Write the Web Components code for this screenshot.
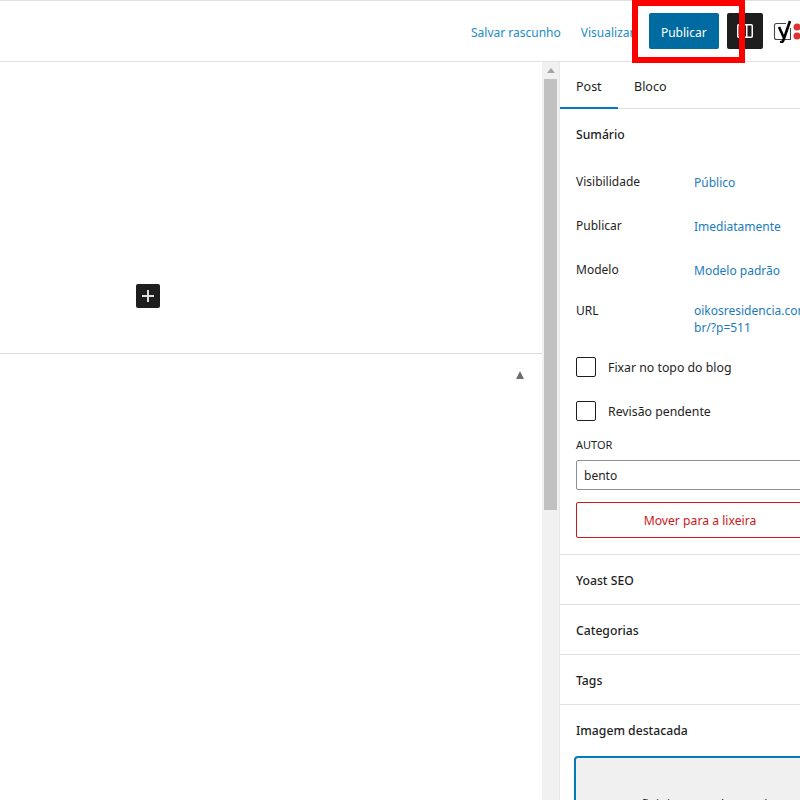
<!DOCTYPE html>
<html lang="pt-BR"><head><meta charset="utf-8"><title>Editor</title>
<style>
html,body{margin:0;padding:0;background:#fff}
body{width:800px;height:800px;overflow:hidden;position:relative;font:12px/18px "Noto Sans","Open Sans",sans-serif;color:#1e1e1e}
</style></head><body>
<editor-app></editor-app>
<script>
function def(name,html){customElements.define(name,class extends HTMLElement{constructor(){super();this.attachShadow({mode:'open'}).innerHTML=html}})}
def('top-bar',`<style>
:host{display:flex;align-items:center;box-sizing:border-box;height:62px;padding:0 0 0 471px;border-top:1px solid #e0e0e0;border-bottom:1px solid #e0e0e0;background:#fff;overflow:hidden;position:relative}
a{color:#1a8cc9;white-space:nowrap;text-decoration:none;flex:none;line-height:18px;padding-top:3px}
.vis{margin-left:20px;width:58px;overflow:hidden}
.pub{flex:none;box-sizing:border-box;width:70px;height:36px;margin-left:10px;padding-top:3px;background:#006ba1;color:#fff;border-radius:2px;display:flex;align-items:center;justify-content:center}
.set{flex:none;width:36px;height:36px;background:#1e1e1e;border-radius:2px;margin-left:8px;display:flex;align-items:center;justify-content:center}
svg{display:block;flex:none}
.yo{margin-left:9px}
</style>
<a>Salvar rascunho</a><a class="vis">Visualizar</a>
<div class="pub">Publicar</div>
<div class="set"><svg width="18" height="18" viewBox="0 0 18 18" fill="none"><rect x="1.75" y="2.75" width="14.5" height="12.5" rx="1" stroke="#fff" stroke-width="1.5"/><rect x="10" y="3" width="1.5" height="12" fill="#fff"/></svg></div>
<svg class="yo" width="32" height="24" viewBox="0 0 32 24"><path d="M14 4.5H4.5a2 2 0 0 0-2 2v12a2 2 0 0 0 2 2h14V9" fill="#fff" stroke="#444" stroke-width="1.1"/><path d="M7 8l5 11M18 2l-6.5 19q-.8 2.4-3.5 2.4" fill="none" stroke="#000" stroke-width="2.6"/><circle cx="25" cy="8" r="3.5" fill="#dc3232"/><circle cx="25" cy="17" r="3.5" fill="#dc3232"/></svg>`);
def('editor-canvas',`<style>
:host{display:flex;flex-direction:column;flex:none;width:542px;height:738px;background:#fff}
.blocks{flex:none;height:292px;box-sizing:border-box;border-bottom:1px solid #ddd;padding-top:222px;padding-left:136px}
.add{width:24px;height:24px;background:#1e1e1e;border-radius:2px;display:flex;align-items:center;justify-content:center}
.meta{flex:1;display:flex;justify-content:flex-end;padding:17px 18px 0 0}
.tri{width:0;height:0;border:4.5px solid transparent;border-top:0;border-bottom:8px solid #6c7074}
</style>
<div class="blocks"><div class="add"><svg width="14" height="14" viewBox="0 0 14 14"><path d="M6 1h2v5h5v2H8v5H6V8H1V6h5z" fill="#e0e0e0"/></svg></div></div>
<div class="meta"><div class="tri"></div></div>`);
def('scroll-bar',`<style>
:host{display:flex;flex-direction:column;flex:none;box-sizing:border-box;width:18px;height:738px;background:#f1f1f1;padding-left:2px;border-right:1px solid #e8e8e8}
.arrow{flex:none;width:13px;height:17px;display:flex;align-items:center;justify-content:center}
.arrow i{width:0;height:0;border:4px solid transparent;border-top:0;border-bottom:5px solid #a3a3a3}
.thumb{flex:none;width:13px;height:431px;background:#c1c1c1}
</style><div class="arrow"><i></i></div><div class="thumb"></div>`);
def('side-panel',`<style>
:host{display:block;flex:none;width:280px;height:738px;background:#fff;overflow:hidden}
</style><slot></slot>`);
def('panel-tabs',`<style>
:host{display:flex;height:47px;box-sizing:border-box;border-bottom:1px solid #e0e0e0;font-size:12.5px}
.t{box-sizing:border-box;height:47px;padding:16px 0 0 16px;color:#1e1e1e}
.on{width:58px;border-bottom:2px solid #007cba}
</style><div class="t on">Post</div><div class="t">Bloco</div>`);
def('panel-section',`<style>
:host{display:block;box-sizing:border-box;height:50px;border-bottom:1px solid #e0e0e0;padding:0 16px}
h2{margin:0;font:500 12.2px/18px "Noto Sans","Open Sans",sans-serif;color:#1e1e1e;padding:17px 0 14px}
</style><h2><slot name="title"></slot></h2><slot></slot>`);
def('post-row',`<style>
:host{display:grid;grid-template-columns:118px 1fr;height:44px;align-items:start;white-space:nowrap}
.v{color:#1a7cbc;padding-top:1px}
</style><div><slot name="k"></slot></div><div class="v"><slot name="v"></slot></div>`);
def('check-row',`<style>
:host{display:flex;align-items:center;gap:12px;height:44px;font-size:12.3px}
i{flex:none;box-sizing:border-box;width:20px;height:20px;border:1px solid #1e1e1e;border-radius:2px;background:#fff}
span{padding-top:2px}
</style><i></i><span><slot></slot></span>`);
def('editor-app',`<style>
:host{display:block;width:800px;height:800px;position:relative;overflow:hidden}
.main{display:flex;height:738px}
.red{position:absolute;left:632px;top:0;width:113px;height:63px;box-sizing:border-box;border:6px solid #f00;pointer-events:none}
.rows{padding-top:15px}
.lab{font-size:11px;line-height:14px;margin-top:5px;height:22px}
.inp{box-sizing:border-box;width:248px;height:30px;border:1px solid #8c8f94;border-radius:2px;padding:6px 7px 4px}
.trash{box-sizing:border-box;width:248px;height:36px;margin-top:12px;padding-top:2px;border:1px solid #cc1818;border-radius:2px;color:#cc1818;font-size:12.2px;display:flex;align-items:center;justify-content:center}
.ph{box-sizing:border-box;width:252px;height:120px;margin:2px 0 0 -2px;background:#f0f0f0;border:2px solid #007cba;border-radius:4px;text-align:center;padding-top:38px;color:#1e1e1e}
.url{display:block;line-height:17px;margin-top:-1px}
</style>
<top-bar></top-bar>
<div class="main">
<editor-canvas></editor-canvas><scroll-bar></scroll-bar>
<side-panel>
<panel-tabs></panel-tabs>
<panel-section style="height:446px"><span slot="title">Sumário</span>
<div class="rows">
<post-row><span slot="k">Visibilidade</span><span slot="v">Público</span></post-row>
<post-row><span slot="k">Publicar</span><span slot="v">Imediatamente</span></post-row>
<post-row style="height:41px"><span slot="k">Modelo</span><span slot="v">Modelo padrão</span></post-row>
<post-row style="height:43px"><span slot="k">URL</span><span slot="v" class="url">oikosresidencia.com.<br>br/?p=511</span></post-row>
<check-row>Fixar no topo do blog</check-row>
<check-row>Revisão pendente</check-row>
</div>
<div class="lab">AUTOR</div>
<div class="inp">bento</div>
<div class="trash">Mover para a lixeira</div>
</panel-section>
<panel-section><span slot="title">Yoast SEO</span></panel-section>
<panel-section><span slot="title">Categorias</span></panel-section>
<panel-section><span slot="title">Tags</span></panel-section>
<panel-section style="height:auto"><span slot="title">Imagem destacada</span>
<div class="ph">Definir imagem destacada</div></panel-section>
</side-panel>
</div>
<div class="red"></div>`);
</script>
</body></html>
